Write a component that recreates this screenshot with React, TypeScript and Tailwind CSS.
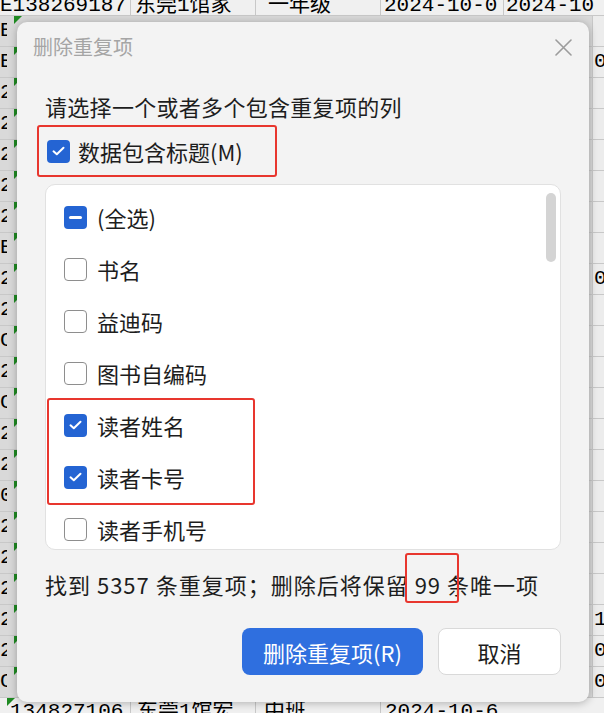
import React from 'react';

const leftChars = ['E', 'E', '2', '2', '2', '2', '2', 'E', '2', '2', 'C', '2', 'C', '2', '2', '0', '2', '2', '2', '2', '2', 'C'];
const rightVals: Record<number, string> = { 1: '0', 8: '0', 19: '1', 20: '0', 21: '0' };

const columns = [
  { name: '(全选)', state: 'mixed' },
  { name: '书名', state: 'off' },
  { name: '益迪码', state: 'off' },
  { name: '图书自编码', state: 'off' },
  { name: '读者姓名', state: 'on' },
  { name: '读者卡号', state: 'on' },
  { name: '读者手机号', state: 'off' },
];

function GreenMark() {
  return (
    <span className="absolute left-[7px] top-0 h-0 w-0 border-t-[8px] border-r-[8px] border-t-[#1f8a22] border-r-transparent" />
  );
}

function Sheet() {
  return (
    <div className="flex flex-col font-['Liberation_Mono','Noto_Sans_CJK_SC',monospace] text-[21px] text-black">
      <div className="flex h-[16px] items-end overflow-hidden border-b border-[#c8c8c8] bg-[#f0f0f0] leading-[18px]">
        <div className="w-[131px] shrink-0 overflow-hidden whitespace-nowrap border-r border-[#c8c8c8]">E138269187</div>
        <div className="w-[125px] shrink-0 overflow-hidden whitespace-nowrap border-r border-[#c8c8c8] pl-[4px]">东莞1馆家</div>
        <div className="w-[125px] shrink-0 overflow-hidden whitespace-nowrap border-r border-[#c8c8c8] pl-[12px]">一年级</div>
        <div className="w-[123px] shrink-0 overflow-hidden whitespace-nowrap border-r border-[#c8c8c8] pl-[3px]">2024-10-0</div>
        <div className="flex-1 overflow-hidden whitespace-nowrap pl-[2px]">2024-10</div>
      </div>
      {leftChars.map((c, i) => (
        <div key={i} className="flex h-[31px] border-b border-[#c8c8c8]">
          <div className="w-[7px] shrink-0 overflow-hidden bg-[#d9d9d9] pt-[4px] leading-[22px]">{c}</div>
          <div className="relative flex-1 bg-[#d9d9d9]">
            <GreenMark />
          </div>
          <div className="w-[12px] shrink-0 overflow-hidden border-l border-[#c8c8c8] bg-[#ececec] pl-[1px] pt-[4px] leading-[22px]">
            {rightVals[i] ?? ''}
          </div>
        </div>
      ))}
      <div className="relative flex h-[20px] overflow-hidden bg-[#f0f0f0] pt-[3px] leading-[22px]">
        <GreenMark />
        <div className="w-[131px] shrink-0 overflow-hidden whitespace-nowrap border-r border-[#c8c8c8] pl-[10px]">134827106</div>
        <div className="w-[125px] shrink-0 overflow-hidden whitespace-nowrap border-r border-[#c8c8c8] pl-[6px]">东莞1馆宏</div>
        <div className="w-[125px] shrink-0 overflow-hidden whitespace-nowrap border-r border-[#c8c8c8] pl-[8px]">中班</div>
        <div className="flex-1 overflow-hidden whitespace-nowrap pl-[4px]">2024-10-6</div>
      </div>
    </div>
  );
}

function Box({ state }: { state: string }) {
  if (state === 'off') {
    return <span className="h-[23px] w-[23px] shrink-0 rounded-[4px] border-[1.5px] border-[#8e8e8e] bg-white" />;
  }
  return (
    <span className="flex h-[23px] w-[23px] shrink-0 items-center justify-center rounded-[4px] bg-[#2464d3]">
      {state === 'on' ? (
        <svg width="13" height="10" viewBox="0 0 13 10" fill="none">
          <path d="M1.5 5.3 L4.8 8.3 L11.5 1.8" stroke="white" strokeWidth="2" strokeLinecap="round" strokeLinejoin="round" />
        </svg>
      ) : (
        <span className="h-[3px] w-[13px] rounded-full bg-white" />
      )}
    </span>
  );
}

function Item({ name, state }: { name: string; state: string }) {
  return (
    <div className="flex h-[52px] items-center gap-[10px] pl-[18px]">
      <Box state={state} />
      <span className="whitespace-nowrap">{name}</span>
    </div>
  );
}

export default function App() {
  return (
    <div className="relative h-[713px] w-[604px] overflow-hidden bg-[#ececec]">
      <Sheet />

      <div className="absolute left-[17px] top-[22px] flex h-[680px] w-[572px] flex-col rounded-[10px] bg-[#f3f3f3] font-['Noto_Sans_CJK_SC',sans-serif] text-[22px] leading-[30px] text-[#1d1d1d] shadow-[0_1px_8px_rgba(0,0,0,0.28)]">
        <div className="flex h-[50px] shrink-0 items-center justify-between pl-[16px] pr-[17px]">
          <span className="text-[20px] leading-[28px] text-[#a5a5a5]">删除重复项</span>
          <svg width="17" height="17" viewBox="0 0 17 17" fill="none">
            <path d="M1 1 L16 16 M16 1 L1 16" stroke="#9c9c9c" strokeWidth="1.6" strokeLinecap="round" />
          </svg>
        </div>

        <div className="flex flex-col px-[28px]">
          <p className="mt-[19px] whitespace-nowrap tracking-[0.3px]">请选择一个或者多个包含重复项的列</p>

          <div className="-ml-[8px] mt-[4px] flex h-[52px] w-[240px] items-center gap-[8px] rounded-[3px] border-2 border-[#e8362e] pl-[8px]">
            <Box state="on" />
            <span className="whitespace-nowrap">数据包含标题(M)</span>
          </div>

          <div className="relative mt-[7px] h-[366px] w-[516px] overflow-hidden rounded-[10px] border border-[#e1e1e1] bg-white pt-[6px]">
            {columns.slice(0, 4).map((c) => (
              <Item key={c.name} name={c.name} state={c.state} />
            ))}
            <div className="relative">
              {columns.slice(4, 6).map((c) => (
                <Item key={c.name} name={c.name} state={c.state} />
              ))}
              <span className="pointer-events-none absolute left-[1px] top-[-1px] h-[107px] w-[208px] rounded-[3px] border-2 border-[#e8362e]" />
            </div>
            <Item name={columns[6].name} state={columns[6].state} />
            <span className="absolute right-[4px] top-[8px] h-[69px] w-[10px] rounded-full bg-[#d4d4d4]" />
          </div>

          <p className="mt-[19px] whitespace-nowrap tracking-[1px]">
            找到 5357 条重复项；删除后将保留{' '}
            <span className="relative inline-block">
              99
              <span className="pointer-events-none absolute left-[-10px] top-[-16px] h-[50px] w-[54px] rounded-[3px] border-2 border-[#e8362e]" />
            </span>{' '}
            条唯一项
          </p>

          <div className="mt-[29px] flex justify-end gap-[15px]">
            <button className="h-[47px] w-[181px] rounded-[8px] bg-[#2f6fdf] text-white">删除重复项(R)</button>
            <button className="h-[47px] w-[123px] rounded-[8px] border border-[#d9d9d9] bg-white text-[#1d1d1d]">取消</button>
          </div>
        </div>
      </div>
    </div>
  );
}
